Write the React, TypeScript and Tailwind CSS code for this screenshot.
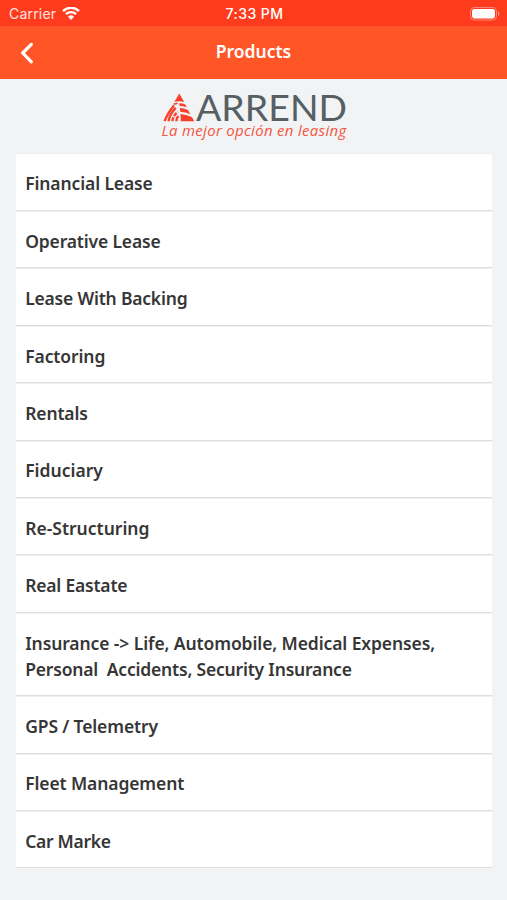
const products = [
  { lines: ['Financial Lease'], tracking: 'tracking-[-0.12px]' },
  { lines: ['Operative Lease'], tracking: 'tracking-[-0.16px]' },
  { lines: ['Lease With Backing'], tracking: 'tracking-[-0.2px]' },
  { lines: ['Factoring'], tracking: 'tracking-[-0.1px]' },
  { lines: ['Rentals'], tracking: 'tracking-[-0.15px]' },
  { lines: ['Fiduciary'], tracking: 'tracking-normal' },
  { lines: ['Re-Structuring'], tracking: 'tracking-normal' },
  { lines: ['Real Eastate'], tracking: 'tracking-[-0.2px]' },
  {
    lines: ['Insurance -> Life, Automobile, Medical Expenses,', 'Personal  Accidents, Security Insurance'],
    tracking: 'tracking-[-0.1px]'
  },
  { lines: ['GPS / Telemetry'], tracking: 'tracking-[-0.13px]' },
  { lines: ['Fleet Management'], tracking: 'tracking-[-0.12px]' },
  { lines: ['Car Marke'], tracking: 'tracking-[-0.3px]' }
]

function StatusBar() {
  return (
    <div className="grid h-[26px] grid-cols-3 items-center bg-[#ff3b1d] pt-px pl-[9px] pr-[7px] font-['Inter',sans-serif] text-[14px] text-white">
      <div className="flex items-center gap-[6px]">
        <span className="tracking-[0.2px] text-white/85">Carrier</span>
        <svg width="18" height="14" viewBox="0 0 18 14" fill="none" stroke="white" strokeWidth="2.4">
          <path d="M1 4.1a11.3 11.3 0 0 1 16 0" />
          <path d="M4 7.2a7.1 7.1 0 0 1 10 0" />
          <path d="M9 12.9 6 9.8a4.3 4.3 0 0 1 6 0Z" fill="white" stroke="none" />
        </svg>
      </div>
      <span className="text-center font-medium tracking-[0.45px]">7:33 PM</span>
      <svg className="justify-self-end" width="30" height="14" viewBox="0 0 30 14">
        <rect x="0.5" y="0.5" width="26" height="12.5" rx="3.8" fill="none" stroke="white" strokeOpacity="0.4" />
        <rect x="2" y="2" width="23" height="9.5" rx="2.4" fill="white" />
        <path d="M28 4.6c1.7.5 1.7 3.9 0 4.4Z" fill="white" fillOpacity="0.5" />
      </svg>
    </div>
  )
}

function Header() {
  return (
    <header className="grid h-[53px] grid-cols-3 items-center bg-[#ff5527] px-5 text-white">
      <button type="button" aria-label="Back">
        <svg width="14" height="22" viewBox="0 0 14 22" fill="none" stroke="white" strokeWidth="3.2" strokeLinecap="round" strokeLinejoin="round">
          <path d="M11.3 2.4 2.7 11l8.6 8.8" />
        </svg>
      </button>
      <h1 className="pb-[2px] text-center text-[17.5px] font-semibold">Products</h1>
    </header>
  )
}

function Logo() {
  return (
    <svg className="mx-auto block" width="190" height="64" viewBox="0 0 190 64" role="img" aria-label="Arrend">
      {/* Right face: stacked bands, left face: curved rays */}
      <g fill="#f8412b">
        <path d="M20.3 14.4 25.2 23Q20.5 21.6 15.4 22.8Z" />
        <path d="M20.4 24.2Q23 24.1 26 25.2L27.9 28.5Q24.5 27.1 20.6 27.1Z" />
        <path d="M20.8 28.9Q24.8 29 29 31.1L31.4 35.2Q26.5 33 21.2 32.8Z" />
        <path d="M21.4 34.9Q27 35.1 32.8 38L35.4 42.2H21.8Z" />
      </g>
      <g fill="none" stroke="#f8412b" strokeWidth="2.4">
        <path d="M5.6 42.2Q8.4 34.4 15 26.4" />
        <path d="M9.5 42.2Q11 34.5 16.8 28.8" />
        <path d="M13.4 42.2Q13.8 36.8 18.8 32.8" strokeDasharray="4.2 1.2" />
        <path d="M17.4 42.2Q17.3 39.4 19.3 37" />
        <path d="M14.6 25.3 18.6 24.2" strokeWidth="1.6" />
      </g>
      <text x="37" y="42" fontFamily="Lato, sans-serif" fontSize="36" fill="#566064" textLength="151" lengthAdjust="spacingAndGlyphs">
        ARREND
      </text>
      <text x="2.5" y="57" fontFamily="Open Sans, sans-serif" fontStyle="italic" fontSize="14" letterSpacing="0.3" fill="#f4553f" textLength="185" lengthAdjust="spacingAndGlyphs">
        La mejor opción en leasing
      </text>
    </svg>
  )
}

export default function App() {
  return (
    <div className="min-h-[900px] bg-[#f1f3f5] font-['Noto_Sans',sans-serif]">
      <StatusBar />
      <Header />
      <Logo />
      <ul className="mt-[10.4px] mr-[15px] ml-4">
        {products.map(({ lines, tracking }) => (
          <li
            key={lines[0]}
            className="border-b border-[#dcdddf] bg-white px-[9.2px] pt-[17.9px] pb-[12.75px] text-[17.5px] leading-[25.8px] font-semibold text-[#363636] shadow-[inset_0_1px_0_#f0f0f1]"
          >
            {lines.map((line, i) => (
              <p key={line} className={`whitespace-pre ${i > 0 ? 'tracking-[-0.19px]' : tracking}`}>
                {line}
              </p>
            ))}
          </li>
        ))}
      </ul>
    </div>
  )
}
